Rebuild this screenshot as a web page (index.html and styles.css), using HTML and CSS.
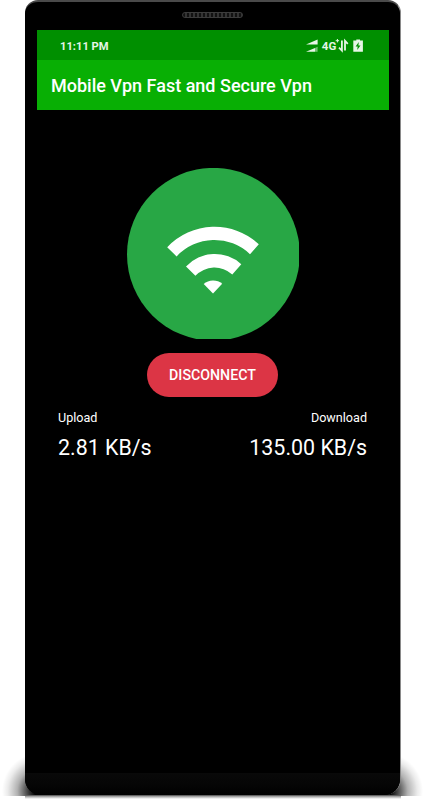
FILE: index.html
```
<!DOCTYPE html>
<html lang="en">
<head>
    <meta charset="UTF-8">
    <title>Mobile Vpn Fast and Secure Vpn</title>
    <link rel="stylesheet" href="styles.css">
</head>
<body>

<div class="stage">
    <div class="shadow shadow-left"></div>
    <div class="shadow shadow-right"></div>
    <div class="shadow-base"></div>

    <div class="phone">
        <div class="speaker"></div>

        <div class="screen">
            <div class="status-bar">
                <span class="time">11:11 PM</span>
                <svg class="status-icons" width="60" height="16" viewBox="0 0 60 16" fill="#e6f5e6">
                    <!-- signal -->
                    <path d="M0 6.6L11.6 1.6V6.6z"/>
                    <path d="M0 13.8L9 9.9V13.8z"/>
                    <path d="M9 9.9L11.6 8.8V13.8H9z" opacity=".5"/>
                    <text x="15.8" y="12.4" class="network">4G</text>
                    <path d="M31.4 1V4.4M29.7 2.7H33.1" stroke="#e6f5e6" stroke-width="1"/>
                    <!-- data arrows -->
                    <path d="M35.9 2.6V12.6L33 9.6M39 12.6V2.8L41.8 5.8" fill="none" stroke="#e6f5e6" stroke-width="1.8"/>
                    <!-- battery -->
                    <path d="M47.3 2.4H50.3V1.6H54V2.4H56.9V13.8H47.3z"/>
                    <path d="M52.8 4L49.6 8.6H51.7L51.2 12L54.5 7.4H52.4z" fill="#008f00"/>
                </svg>
            </div>

            <header class="app-bar">Mobile Vpn Fast and Secure Vpn</header>

            <div class="content">
                <svg class="wifi" width="172" height="171" viewBox="0 0 172 171">
                    <circle cx="86.4" cy="86.3" r="86.4" fill="#28a745"/>
                    <g fill="#fff">
                        <path d="M40.2 79.2A65 65 0 0 1 131.8 76.2L123 86.2A51.5 51.5 0 0 0 49.6 88.4z"/>
                        <path d="M59 98.4A39.5 39.5 0 0 1 114.3 96.2L105.3 106.4A26.5 26.5 0 0 0 68.4 107.8z"/>
                        <path d="M76.7 116.1A14 14 0 0 1 95.2 115.7L86 125.6z"/>
                    </g>
                </svg>

                <button class="disconnect-button">DISCONNECT</button>

                <div class="speeds">
                    <div class="speed">
                        <div class="speed-label">Upload</div>
                        <div class="speed-value">2.81 KB/s</div>
                    </div>
                    <div class="speed speed-right">
                        <div class="speed-label">Download</div>
                        <div class="speed-value">135.00 KB/s</div>
                    </div>
                </div>
            </div>
        </div>

        <div class="chin"></div>
    </div>
</div>

</body>
</html>
```
FILE: styles.css
```
body {
    margin: 0;
    font-family: Roboto, sans-serif;
    background-color: #fff;
    color: #fff;
}
.stage {
    position: relative;
    height: 800px;
    overflow: hidden;
}
.phone {
    position: relative;
    box-sizing: border-box;
    display: flex;
    flex-direction: column;
    width: 376px;
    height: 795px;
    margin-left: 25px;
    border-top: 2px solid #4a4a4a;
    border-right: 1px solid #8a8a8a;
    border-radius: 13px 13px 16px 16px;
    background-color: #000;
    overflow: hidden;
}
/* soft shadow around the bottom of the phone */
.shadow {
    position: absolute;
    top: 757px;
    width: 50px;
    height: 39px;
}
.shadow-left {
    left: -5px;
    background: radial-gradient(ellipse 38px 38px at 45px 34px, #000 15%, rgba(0, 0, 0, 0.7) 35%, rgba(0, 0, 0, 0.3) 60%, rgba(0, 0, 0, 0.08) 85%, transparent 100%);
}
.shadow-right {
    left: 377px;
    background: radial-gradient(ellipse 38px 38px at 8px 34px, #000 15%, rgba(0, 0, 0, 0.7) 35%, rgba(0, 0, 0, 0.3) 60%, rgba(0, 0, 0, 0.08) 85%, transparent 100%);
}
.shadow-base {
    position: absolute;
    top: 795px;
    left: 25px;
    width: 376px;
    height: 4px;
    background: linear-gradient(to bottom, #444, #aaa 40%, #fff);
}
.speaker {
    box-sizing: border-box;
    flex: none;
    width: 61px;
    height: 6px;
    margin: 10px 0 12px 157px;
    border: 1px solid #3c3c3c;
    border-radius: 3px;
    background: repeating-linear-gradient(to right, #111 0 2px, #333 2px 4px);
}
.screen {
    width: 352px;
    margin-left: 12px;
    flex: 1;
}
.status-bar {
    display: flex;
    align-items: center;
    justify-content: space-between;
    box-sizing: border-box;
    height: 30px;
    padding: 2px 23px 0 23px;
    background-color: #008f00;
    color: #e6f5e6;
}
.time {
    font-size: 11.2px;
    font-weight: 700;
}
.status-icons {
    overflow: visible;
}
.network {
    font-size: 11.5px;
    font-weight: 700;
}
.app-bar {
    height: 50px;
    padding-left: 14px;
    line-height: 52px;
    font-size: 18px;
    font-weight: 500;
    white-space: nowrap;
    background-color: #08af04;
}
.content {
    display: flex;
    flex-direction: column;
    padding: 58px 22px 0 21px;
}
.wifi {
    margin-left: 69px;
}
.disconnect-button {
    width: 131px;
    height: 44px;
    margin: 14px 0 0 89px;
    padding: 0;
    border: none;
    border-radius: 22px;
    background-color: #dc3545;
    color: #fff;
    font-family: inherit;
    font-size: 14.2px;
    font-weight: 500;
}
.speeds {
    display: flex;
    justify-content: space-between;
    margin-top: 12px;
}
.speed-right {
    text-align: right;
}
.speed-label {
    font-size: 12.6px;
    line-height: 17px;
}
.speed-value {
    margin-top: 8px;
    font-size: 21.4px;
    line-height: 28px;
}
.chin {
    height: 22px;
    background: linear-gradient(to bottom, #090909, #050505 60%, #000);
}
```
